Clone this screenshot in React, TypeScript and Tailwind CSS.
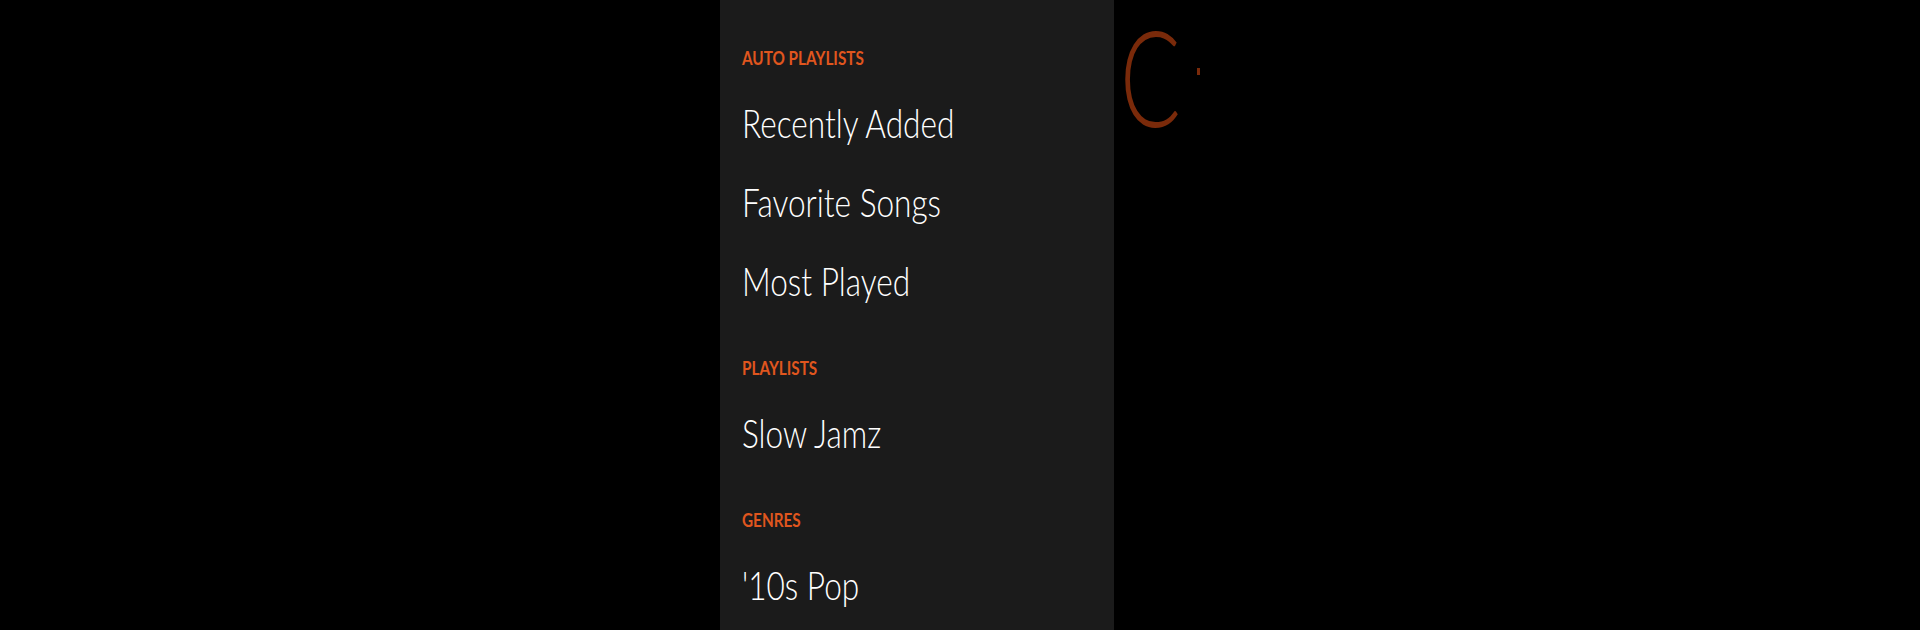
import React from "react";

const sections = [
  { title: "AUTO PLAYLISTS", items: ["Recently Added", "Favorite Songs", "Most Played"] },
  { title: "PLAYLISTS", items: ["Slow Jamz"] },
  { title: "GENRES", items: ["'10s Pop"] },
];

export default function App() {
  return (
    <div
      className="flex h-[630px] w-[1920px] overflow-hidden bg-black"
      style={{ fontFamily: 'Lato, "Noto Sans", sans-serif' }}
    >
      <div className="w-[720px] shrink-0" />
      <div className="w-[394px] shrink-0 bg-[#1b1b1b] pl-[22px] pt-[46px]">
        {sections.map((s, i) => (
          <div key={s.title} className={i === 0 ? "" : "mt-[47px]"}>
            <div className="origin-left scale-x-[0.85] text-[18px] leading-[24px] font-bold text-[#e0561e]">
              {s.title}
            </div>
            <div className="mt-[25px] flex flex-col gap-[23px]">
              {s.items.map((it) => (
                <div
                  key={it}
                  className="origin-left scale-x-[0.79] text-[40px] leading-[56px] font-light text-white whitespace-nowrap"
                >
                  {it}
                </div>
              ))}
            </div>
          </div>
        ))}
      </div>
      <div className="flex items-start pl-[6px]">
        <span className="inline-block w-[115px] shrink-0 origin-left scale-x-[0.67] text-[134px] leading-[152px] font-light text-[#7a2a0a]">
          C
        </span>
        <span className="mt-[68px] -ml-[38px] h-[7px] w-[3px] bg-[#7a2a0a]" />
      </div>
    </div>
  );
}
